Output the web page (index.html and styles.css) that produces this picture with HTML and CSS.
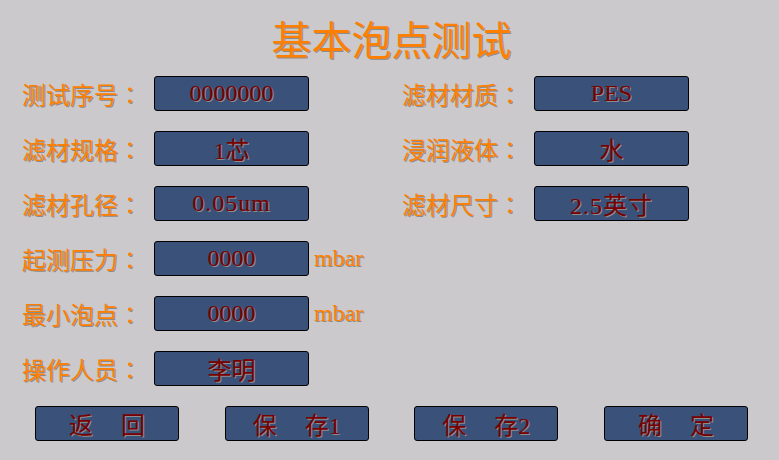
FILE: index.html
```html
<!DOCTYPE html>
<html lang="zh-CN">
<head>
<meta charset="utf-8">
<title>基本泡点测试</title>
<link rel="stylesheet" href="styles.css">
</head>
<body>
<div class="screen">
  <h1 class="title">基本泡点测试</h1>
  <div class="form">
    <div class="label">测试序号<span class="colon">：</span></div>
    <div class="field">0000000</div>
    <div class="unit"></div>
    <div class="label">滤材材质<span class="colon">：</span></div>
    <div class="field">PES</div>

    <div class="label">滤材规格<span class="colon">：</span></div>
    <div class="field">1芯</div>
    <div class="unit"></div>
    <div class="label">浸润液体<span class="colon">：</span></div>
    <div class="field">水</div>

    <div class="label">滤材孔径<span class="colon">：</span></div>
    <div class="field wide">0.05um</div>
    <div class="unit"></div>
    <div class="label">滤材尺寸<span class="colon">：</span></div>
    <div class="field wide">2.5英寸</div>

    <div class="label">起测压力<span class="colon">：</span></div>
    <div class="field">0000</div>
    <div class="unit">mbar</div>
    <div class="empty"></div>
    <div class="empty"></div>

    <div class="label">最小泡点<span class="colon">：</span></div>
    <div class="field">0000</div>
    <div class="unit">mbar</div>
    <div class="empty"></div>
    <div class="empty"></div>

    <div class="label">操作人员<span class="colon">：</span></div>
    <div class="field">李明</div>
    <div class="unit"></div>
    <div class="empty"></div>
    <div class="empty"></div>
  </div>
  <div class="buttons">
    <div class="btn"><span>返</span><span>回</span></div>
    <div class="btn"><span>保</span><span>存1</span></div>
    <div class="btn"><span>保</span><span>存2</span></div>
    <div class="btn"><span>确</span><span>定</span></div>
  </div>
</div>
</body>
</html>
```

FILE: styles.css
```css
html, body {
  margin: 0;
  padding: 0;
  background: #ccc9cc;
}
body {
  width: 779px;
  height: 460px;
  overflow: hidden;
  font-family: "Noto Sans CJK SC", sans-serif;
}
.screen {
  display: flex;
  flex-direction: column;
}
.title {
  margin: 18px 0 0 4px;
  height: 58px;
  font-size: 40px;
  line-height: 40px;
  font-weight: 400;
  text-align: center;
  color: #ff8000;
  text-shadow: 1px 1px 0 #8c8c8c;
}
.form {
  display: grid;
  grid-template-columns: 132px 155px 93px 132px 155px;
  grid-auto-rows: 35px;
  row-gap: 20px;
  padding-left: 22px;
}
.label {
  display: flex;
  align-items: center;
  font-size: 24px;
  color: #ff8000;
  text-shadow: 1px 1px 0 #8c8c8c;
}
.colon {
  font-family: "Noto Sans CJK TC", sans-serif;
}
.field {
  box-sizing: border-box;
  display: flex;
  align-items: center;
  justify-content: center;
  background: #3a5179;
  border: 1px solid #000;
  border-radius: 3px;
  font-family: "Liberation Serif", "Noto Sans CJK SC", serif;
  font-size: 24px;
  color: #7a0000;
  text-shadow: 1px 1px 0 #8c8c8c;
}
.field.wide {
  letter-spacing: 1px;
}
.unit {
  display: flex;
  align-items: center;
  padding-left: 5px;
  font-family: "Liberation Serif", serif;
  font-size: 24px;
  color: #ff8000;
  text-shadow: 1px 1px 0 #8c8c8c;
}
.buttons {
  display: flex;
  justify-content: space-between;
  width: 713px;
  margin: 20px 0 0 35px;
}
.btn {
  box-sizing: border-box;
  width: 144px;
  height: 35px;
  display: flex;
  align-items: center;
  justify-content: center;
  gap: 28px;
  background: #3a5179;
  border: 1px solid #000;
  border-radius: 3px;
  font-family: "Liberation Serif", "Noto Sans CJK SC", serif;
  font-size: 24px;
  color: #7a0000;
  text-shadow: 1px 1px 0 #8c8c8c;
}
```
